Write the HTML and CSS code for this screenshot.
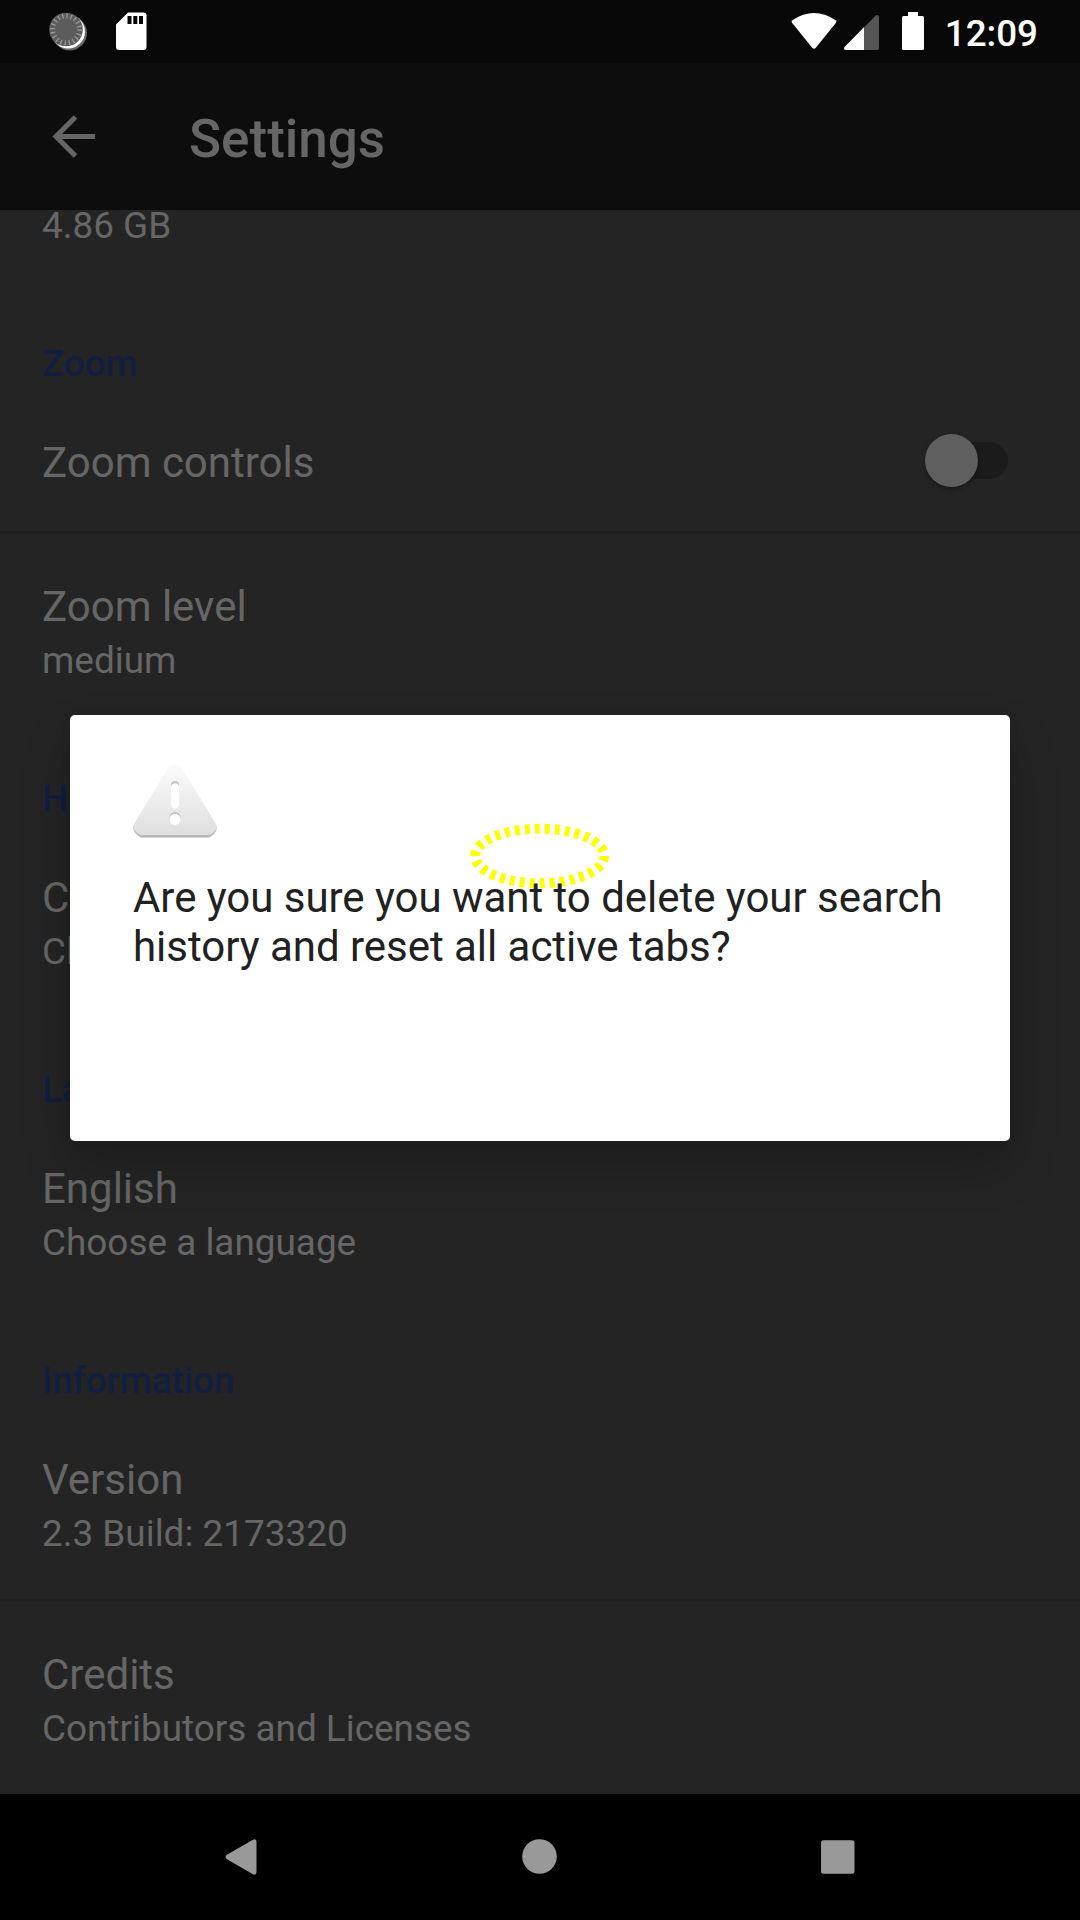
FILE: index.html
```html
<!DOCTYPE html>
<html lang="en">
<head>
<meta charset="utf-8">
<title>Settings</title>
<link rel="stylesheet" href="styles.css">
</head>
<body>
<div class="screen">
  <header class="status">
    <svg class="status-icons" width="160" height="63" viewBox="0 0 160 63">
      <circle cx="69.5" cy="33" r="17.5" fill="#666"/>
      <circle cx="68.2" cy="31.700" r="16.800" fill="#fff"/>
      <circle cx="66" cy="29.5" r="16.8" fill="#5c5c5c"/>
      <circle cx="66" cy="29.5" r="13.5" fill="none" stroke="#999" stroke-width="5" stroke-dasharray="1.3 2.941"/>
      <path d="M128 12.500h15.500a3 3 0 0 1 3 3v31.500a3 3 0 0 1-3 3h-24.500a3 3 0 0 1-3-3v-22.500z" fill="#fff"/>
      <path d="M127.500 16h4v8h-4zM133.300 16h4v8h-4zM139 16h4v8h-4z" fill="#080808"/>
    </svg>
    <div class="status-right">
      <svg width="140" height="63" viewBox="790 0 140 63">
        <path d="M792.500 20.200Q814 6 835.500 20.200Q837 21.500 836 22.800L815.800 47.800Q814 49.800 812.200 47.800L792 22.800Q791 21.500 792.500 20.200Z" fill="#fff"/>
        <path d="M844.500 47L875.500 15.700Q879 13.500 879 17.500V48Q879 50 877 50H846Q843 50 844.500 47Z" fill="#555"/>
        <path d="M844.500 47L864 27.300V50H846Q843 50 844.500 47Z" fill="#fff"/>
        <path d="M908 12h10v4h4.500q1.500 0 1.500 1.500v31q0 1.500-1.500 1.500h-19q-1.500 0-1.500-1.500v-31q0-1.500 1.500-1.500h4.500z" fill="#fff"/>
      </svg>
      <span class="clock">12:09</span>
    </div>
  </header>
  <div class="appbar">
    <svg class="back" width="44" height="44" viewBox="0 0 44 44"><path d="M43 22.500H4M23.500 3L4 22.500L23.500 42" fill="none" stroke="#666" stroke-width="5"/></svg>
    <h1 class="title">Settings</h1>
  </div>
  <main class="list">
    <div class="item clipped"><div class="summary">4.86 GB</div></div>
    <h2 class="category">Zoom</h2>
    <div class="item single"><div class="label">Zoom controls</div><div class="switch"><div class="thumb"></div></div></div>
    <div class="item divided"><div class="label">Zoom level</div><div class="summary">medium</div></div>
    <h2 class="category">History</h2>
    <div class="item"><div class="label">Clear</div><div class="summary">Clear</div></div>
    <h2 class="category">Language</h2>
    <div class="item"><div class="label">English</div><div class="summary">Choose a language</div></div>
    <h2 class="category">Information</h2>
    <div class="item"><div class="label">Version</div><div class="summary">2.3 Build: 2173320</div></div>
    <div class="item divided"><div class="label">Credits</div><div class="summary">Contributors and Licenses</div></div>
  </main>
  <nav class="nav">
    <svg width="1080" height="126" viewBox="0 1794 1080 126" fill="#999">
      <path d="M226.500 1855L252.500 1840Q256.500 1838 256.500 1842V1872Q256.500 1876 252.500 1874L226.500 1859Q224.500 1857 226.500 1855Z"/>
      <circle cx="539.500" cy="1856.500" r="17.300"/>
      <rect x="821" y="1840.300" width="33.500" height="33.400" rx="2.500"/>
    </svg>
  </nav>
  <div class="overlay">
    <section class="dialog">
      <svg class="warning" width="84" height="76" viewBox="0 0 84 76">
        <defs>
          <linearGradient id="face" x1="0" y1="0" x2="0" y2="1"><stop offset="0" stop-color="#fcfcfc"/><stop offset="1" stop-color="#dfdfdf"/></linearGradient>
          <linearGradient id="edge" x1="0" y1="0" x2="0" y2="1"><stop offset="0" stop-color="#fcfcfc"/><stop offset=".8" stop-color="#e0e0e0"/><stop offset="1" stop-color="#b2b2b2"/></linearGradient>
        </defs>
        <path d="M36 5Q42-1 48 5L83 63Q86 70 76 75.500H8Q-2 70 1 63Z" fill="url(#edge)"/>
        <path d="M36 5Q42-2 48 5L83 62Q86 68 76 73H8Q-2 68 1 62Z" fill="url(#face)"/>
        <rect x="38" y="19" width="8" height="27" rx="4" fill="#c8c8c8"/>
        <rect x="38" y="21.500" width="8" height="25" rx="4" fill="#fff"/>
        <circle cx="42" cy="55.500" r="5.700" fill="#c4c4c4"/>
        <circle cx="42" cy="57.300" r="5.500" fill="#fff"/>
      </svg>
      <svg class="marker" width="140" height="66" viewBox="470 823 140 66"><ellipse cx="539.700" cy="856" rx="64.500" ry="27.300" fill="none" stroke="#ff0" stroke-width="10" stroke-dasharray="5 5"/></svg>
      <p class="message">Are you sure you want to delete your search history and reset all active tabs?</p>
    </section>
  </div>
</div>
</body>
</html>
```
FILE: styles.css
```css
* { box-sizing: border-box; }
body { margin: 0; background: #000; font-family: Roboto, sans-serif; }
h1, h2, p { margin: 0; font-weight: 500; }
svg { display: block; flex: none; }
.screen { position: relative; width: 1080px; height: 1920px; display: flex; flex-direction: column; overflow: hidden; color: #666; }
.status { height: 63px; flex: none; background: #080808; display: flex; justify-content: space-between; }
.status-right { display: flex; align-items: center; padding-right: 42px; gap: 15px; }
.clock { color: #fff; font-size: 36.75px; font-weight: 500; line-height: 43px; padding-top: 3px; }
.appbar { height: 147px; flex: none; background: #0d0d0d; display: flex; align-items: center; padding-left: 52px; }
.back { margin-bottom: 2px; }
.title { font-size: 53px; line-height: 62px; margin-left: 93px; padding-top: 4px; }
.list { height: 1584px; flex: none; background: #242424; display: flex; flex-direction: column; justify-content: flex-end; overflow: hidden; }
.item { height: 195px; flex: none; padding: 51px 42px 0; display: flex; flex-direction: column; gap: 8px; }
.clipped { height: 81px; padding-top: 0; justify-content: flex-end; padding-bottom: 44px; }
.divided { border-top: 3px solid #202020; padding-top: 48px; }
.label { font-size: 42px; line-height: 49px; }
.summary { font-size: 36.9px; line-height: 43px; }
.single { height: 144px; flex-direction: row; justify-content: space-between; padding-right: 72px; }
.category { height: 96px; flex: none; padding: 51px 42px 0; font-size: 36.75px; line-height: 43px; color: #121e40; }
.switch { width: 83px; height: 37px; margin-top: 4px; border-radius: 19px; background: #1b1b1b; display: flex; align-items: center; }
.thumb { width: 53px; height: 53px; border-radius: 50%; background: #5f5f5f; box-shadow: 0 2px 4px rgba(0,0,0,.35); }
.nav { height: 126px; flex: none; background: #000; }
.overlay { position: absolute; inset: 63px 0 127px; display: flex; align-items: center; justify-content: center; }
.dialog { position: relative; width: 940px; height: 426px; padding: 47px 63px 0; background: #fff; border-radius: 5px; box-shadow: 0 25px 50px rgba(0,0,0,.2), 0 0 8px rgba(0,0,0,.12); }
.marker { position: absolute; left: 400px; top: 108px; }
.message { position: relative; margin-top: 35px; font-size: 42px; font-weight: 400; line-height: 49px; letter-spacing: -0.03px; color: #212121; }
```
